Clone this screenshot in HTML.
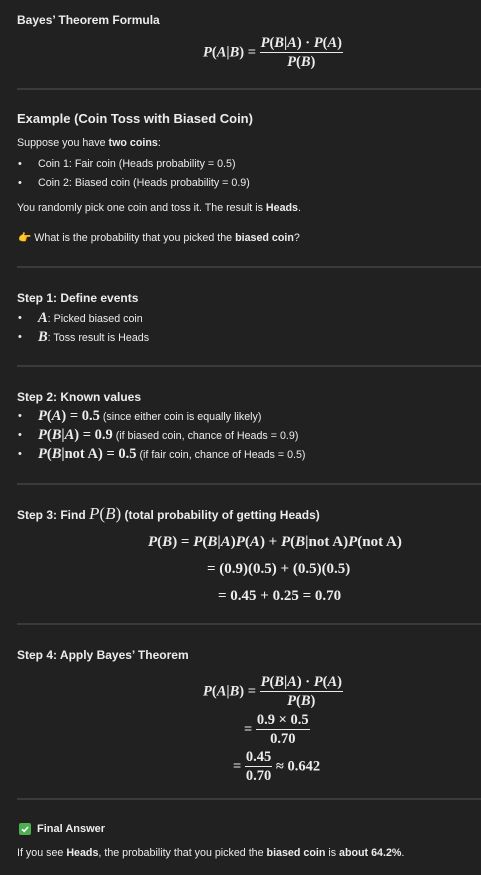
<!DOCTYPE html>
<html><head><meta charset="utf-8"><style>
html,body{margin:0;padding:0;background:#212121;}
body{width:481px;height:875px;position:relative;overflow:hidden;color:#ececec;font-family:"Liberation Sans",sans-serif;font-size:10.7px;}
.a{position:absolute;white-space:nowrap;line-height:14px;}
.h{font-weight:bold;font-size:12px;}
.h2{font-weight:bold;font-size:13px;}
.hr{position:absolute;left:17px;right:0;height:2px;background:#3a3a3a;}
.m{font-family:"Liberation Serif",serif;font-size:14.5px;font-weight:bold;}
.i{font-style:italic;}
.b{font-weight:bold;}
.bul{position:absolute;left:18px;font-size:11px;line-height:14px;}
.fr{display:inline-block;vertical-align:middle;text-align:center;}
.fr>span{display:block;line-height:19px;}
.fr>span.n{border-bottom:1.3px solid #ececec;padding:0 1px;line-height:18px;}
</style></head><body>
<div class="a h" style="left:17px;top:13px">Bayes’ Theorem Formula</div>
<div class="a m" style="left:203px;top:34px"><span class="i">P</span>(<span class="i">A</span>|<span class="i">B</span>) = <span class="fr"><span class="n"><span class="i">P</span>(<span class="i">B</span>|<span class="i">A</span>) · <span class="i">P</span>(<span class="i">A</span>)</span><span><span class="i">P</span>(<span class="i">B</span>)</span></span></div>
<div class="hr" style="top:88px"></div>

<div class="a h2" style="left:17px;top:112px">Example (Coin Toss with Biased Coin)</div>
<div class="a" style="left:17px;top:136px">Suppose you have <span class="b">two coins</span>:</div>
<div class="bul" style="top:157px">•</div><div class="a" style="left:38px;top:157px">Coin 1: Fair coin (Heads probability = 0.5)</div>
<div class="bul" style="top:176px">•</div><div class="a" style="left:38px;top:176px">Coin 2: Biased coin (Heads probability = 0.9)</div>
<div class="a" style="left:17px;top:201px">You randomly pick one coin and toss it. The result is <span class="b">Heads</span>.</div>
<div class="a" style="left:18px;top:231px"><span style="color:#f0a830">👉</span> What is the probability that you picked the <span class="b">biased coin</span>?</div>
<div class="hr" style="top:266px"></div>

<div class="a h" style="left:17px;top:291px">Step 1: Define events</div>
<div class="bul" style="top:311px">•</div><div class="a" style="left:38px;top:311px"><span class="m i">A</span>: Picked biased coin</div>
<div class="bul" style="top:330px">•</div><div class="a" style="left:38px;top:330px"><span class="m i">B</span>: Toss result is Heads</div>
<div class="hr" style="top:365px"></div>

<div class="a h" style="left:17px;top:390px">Step 2: Known values</div>
<div class="bul" style="top:409px">•</div><div class="a" style="left:38px;top:409px"><span class="m"><span class="i">P</span>(<span class="i">A</span>) = 0.5</span> (since either coin is equally likely)</div>
<div class="bul" style="top:428px">•</div><div class="a" style="left:38px;top:428px"><span class="m"><span class="i">P</span>(<span class="i">B</span>|<span class="i">A</span>) = 0.9</span> (if biased coin, chance of Heads = 0.9)</div>
<div class="bul" style="top:447px">•</div><div class="a" style="left:38px;top:447px"><span class="m"><span class="i">P</span>(<span class="i">B</span>|not A) = 0.5</span> (if fair coin, chance of Heads = 0.5)</div>
<div class="hr" style="top:483px"></div>

<div class="a h" style="left:17px;top:507px">Step 3: Find <span class="m" style="font-weight:normal;font-size:17px"><span class="i">P</span>(<span class="i">B</span>)</span> (total probability of getting Heads)</div>
<div class="a m" style="left:148px;top:535px;font-size:15px"><span class="i">P</span>(<span class="i">B</span>) = <span class="i">P</span>(<span class="i">B</span>|<span class="i">A</span>)<span class="i">P</span>(<span class="i">A</span>) + <span class="i">P</span>(<span class="i">B</span>|not A)<span class="i">P</span>(not A)</div>
<div class="a m" style="left:207px;top:562px;font-size:15px">= (0.9)(0.5) + (0.5)(0.5)</div>
<div class="a m" style="left:218px;top:589px;font-size:15px">= 0.45 + 0.25 = 0.70</div>
<div class="hr" style="top:623px"></div>

<div class="a h" style="left:17px;top:648px">Step 4: Apply Bayes’ Theorem</div>
<div class="a m" style="left:203px;top:673px"><span class="i">P</span>(<span class="i">A</span>|<span class="i">B</span>) = <span class="fr"><span class="n"><span class="i">P</span>(<span class="i">B</span>|<span class="i">A</span>) · <span class="i">P</span>(<span class="i">A</span>)</span><span><span class="i">P</span>(<span class="i">B</span>)</span></span></div>
<div class="a m" style="left:244px;top:711px">= <span class="fr"><span class="n">0.9 × 0.5</span><span>0.70</span></span></div>
<div class="a m" style="left:233px;top:748px">= <span class="fr"><span class="n">0.45</span><span>0.70</span></span> ≈ 0.642</div>
<div class="hr" style="top:798px"></div>

<div class="a" style="left:19px;top:823px;width:12px;height:12px;background:#4caf50;border-radius:2px"><svg width="12" height="12" viewBox="0 0 12 12" style="position:absolute;left:0;top:0"><path d="M3 6.2 L5.2 8.3 L9 4" stroke="#fff" stroke-width="1.6" fill="none"/></svg></div>
<div class="a b" style="left:37px;top:822px;font-size:11px">Final Answer</div>
<div class="a" style="left:17px;top:846px">If you see <span class="b">Heads</span>, the probability that you picked the <span class="b">biased coin</span> is <span class="b">about 64.2%</span>.</div>
</body></html>
